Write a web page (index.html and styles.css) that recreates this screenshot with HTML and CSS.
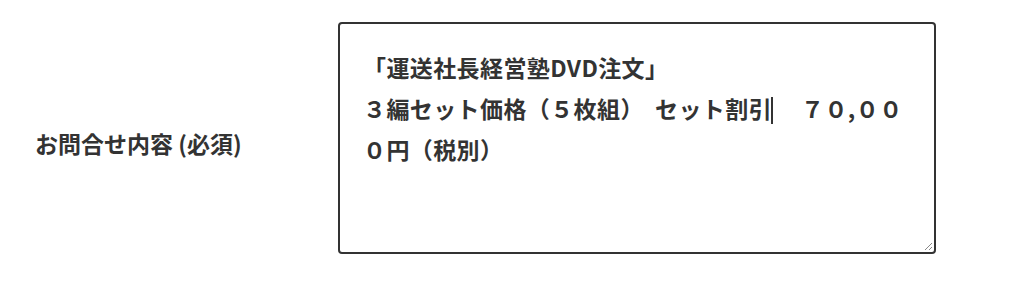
FILE: index.html
```html
<!DOCTYPE html>
<html lang="ja">
<head>
  <meta charset="UTF-8">
  <meta name="viewport" content="width=device-width, initial-scale=1.0">
  <title>お問合せ</title>
  <link rel="stylesheet" href="styles.css">
</head>
<body>
  <div class="form-row">
    <label class="form-label" for="message">お問合せ内容 (必須)</label>
    <div class="textarea" id="message">
      <div class="textarea-text">「運送社長経営塾DVD注文」<br>３編セット価格（５枚組）  セット割引<span class="caret"></span>　 ７０,００<br>０円（税別）</div>
      <svg class="resize" width="10" height="10" viewBox="0 0 10 10">
        <line x1="9" y1="2" x2="2" y2="9" stroke="#888" stroke-width="1"/>
        <line x1="9" y1="6" x2="6" y2="9" stroke="#888" stroke-width="1"/>
      </svg>
    </div>
  </div>
</body>
</html>
```

FILE: styles.css
```css
/* formulario de contato */
* {
  margin: 0;
  padding: 0;
  box-sizing: border-box;
}

body {
  background-color: #fff;
  font-family: "Noto Sans CJK JP", "Noto Sans", sans-serif;
  color: #333;
}

.form-row {
  display: flex;
  align-items: flex-start;
  padding-top: 22px;
}

.form-label {
  width: 338px;
  padding-left: 35px;
  margin-top: 106px;
  font-size: 23px;
  line-height: 30px;
  font-weight: bold;
}

.textarea {
  position: relative;
  width: 598px;
  height: 232px;
  border: 2px solid #333;
  border-radius: 4px;
  padding: 23px 16px 0 23px;
}

.textarea-text {
  font-size: 23px;
  line-height: 41px;
  font-weight: bold;
  letter-spacing: 0.4px;
  white-space: pre-wrap;
}

.caret {
  display: inline-block;
  width: 0;
  height: 27px;
  border-left: 2px solid #333;
  vertical-align: -6px;
  margin-left: -1px;
  margin-right: -1px;
}

.resize {
  position: absolute;
  right: 1px;
  bottom: 1px;
}
```
